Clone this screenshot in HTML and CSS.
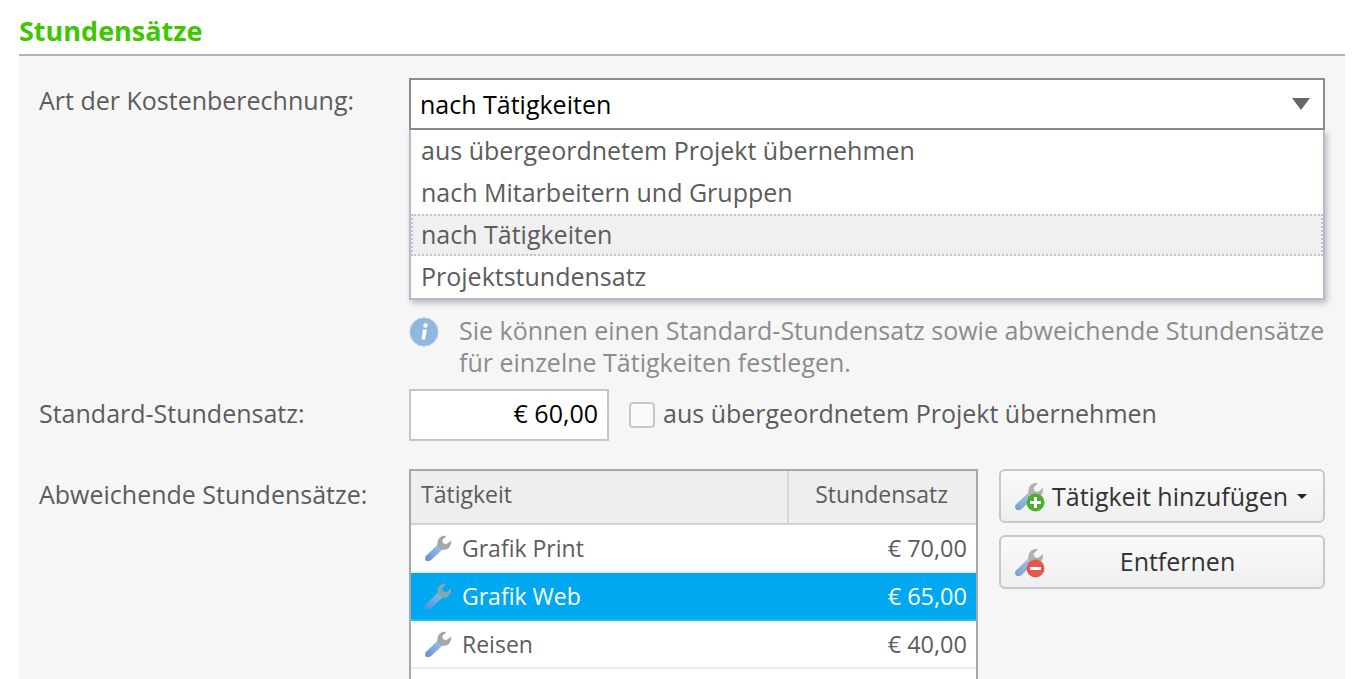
FILE: index.html
```html
<!DOCTYPE html>
<html lang="de">
<head>
  <meta charset="UTF-8">
  <title>Stundensätze</title>
  <link rel="stylesheet" href="styles.css">
</head>
<body>
  <svg class="defs" width="0" height="0" aria-hidden="true">
    <defs>
      <linearGradient id="handle" x1="0" y1="1" x2="1" y2="0">
        <stop offset="0" stop-color="#5f8fd0"/>
        <stop offset="1" stop-color="#a3c4ec"/>
      </linearGradient>
      <symbol id="wrench" viewBox="0 0 30 30">
        <path d="M1.500 24 L15 11 L20 16.500 L7 28.500 Q4 30 2 28.500 Q0.500 26.500 1.500 24 Z" fill="url(#handle)"/>
        <path d="M14.500 13 Q13.500 6 18 3 Q20.500 1.500 24 2 L19.500 7 L20.500 10 L24 11 L29 7 Q29.500 12 26.500 15 Q23 18 19 16.500 Z" fill="#a6a6a6"/>
      </symbol>
    </defs>
  </svg>

  <main>
    <h2>Stundensätze</h2>
    <section class="panel">
      <div class="row row-type">
        <label>Art der Kostenberechnung:</label>
        <div class="field">
          <div class="select">
            <span>nach Tätigkeiten</span>
            <svg class="select-arrow" width="20" height="14" viewBox="0 0 20 14"><path d="M1 1 H19 L10 13 Z" fill="#666"/></svg>
          </div>
          <ul class="options">
            <li>aus übergeordnetem Projekt übernehmen</li>
            <li>nach Mitarbeitern und Gruppen</li>
            <li class="current">nach Tätigkeiten</li>
            <li>Projektstundensatz</li>
          </ul>
          <div class="note">
            <svg class="note-icon" width="30" height="30" viewBox="0 0 30 30">
              <circle cx="15" cy="15" r="14" fill="#8fb8e0"/>
              <circle cx="15" cy="15" r="14" fill="none" stroke="#a9c6e3" stroke-width="1"/>
              <circle cx="16.500" cy="8.500" r="2.200" fill="#fff"/>
              <path d="M14 12.500 H18 L16 22.500 H12.500 Z" fill="#fff"/>
            </svg>
            <p>Sie können einen Standard-Stundensatz sowie abweichende Stundensätze für einzelne Tätigkeiten festlegen.</p>
          </div>
        </div>
      </div>

      <div class="row row-rate">
        <label>Standard-Stundensatz:</label>
        <div class="field field-inline">
          <div class="money">€ 60,00</div>
          <span class="checkbox"></span>
          <span class="check-label">aus übergeordnetem Projekt übernehmen</span>
        </div>
      </div>

      <div class="row row-rates">
        <label>Abweichende Stundensätze:</label>
        <div class="field field-table">
          <div class="table">
            <div class="thead">
              <div class="th th-name">Tätigkeit</div>
              <div class="th th-rate">Stundensatz</div>
            </div>
            <div class="tr">
              <svg class="wrench" width="28" height="28"><use href="#wrench"/></svg>
              <span class="name">Grafik Print</span><span class="rate">€ 70,00</span>
            </div>
            <div class="tr selected">
              <svg class="wrench" width="28" height="28"><use href="#wrench"/></svg>
              <span class="name">Grafik Web</span><span class="rate">€ 65,00</span>
            </div>
            <div class="tr">
              <svg class="wrench" width="28" height="28"><use href="#wrench"/></svg>
              <span class="name">Reisen</span><span class="rate">€ 40,00</span>
            </div>
            <div class="tr"></div>
          </div>
          <div class="actions">
            <button type="button">
              <span class="btn-icon">
                <svg class="wrench" width="30" height="30"><use href="#wrench"/></svg>
                <svg class="badge" width="19" height="19" viewBox="0 0 19 19">
                  <circle cx="9.500" cy="9.500" r="9" fill="#4cb02c"/>
                  <path d="M8 4 H11 V8 H15 V11 H11 V15 H8 V11 H4 V8 H8 Z" fill="#fff"/>
                </svg>
              </span>
              <span class="btn-text">Tätigkeit hinzufügen</span>
              <span class="caret"></span>
            </button>
            <button type="button">
              <span class="btn-icon">
                <svg class="wrench" width="30" height="30"><use href="#wrench"/></svg>
                <svg class="badge" width="19" height="19" viewBox="0 0 19 19">
                  <circle cx="9.500" cy="9.500" r="9" fill="#e4574c"/>
                  <rect x="4" y="8" width="11" height="3" fill="#fff"/>
                </svg>
              </span>
              <span class="btn-text btn-center">Entfernen</span>
            </button>
          </div>
        </div>
      </div>
    </section>
  </main>
</body>
</html>
```

FILE: styles.css
```css
html, body {
  margin: 0;
  padding: 0;
  height: 679px;
  overflow: hidden;
  background-color: #fff;
  font-family: "Open Sans", sans-serif;
  font-size: 25px;
  color: #5c5c5c;
}

.defs {
  position: absolute;
}

main {
  width: 1326px;
  margin-left: 19px;
}

h2 {
  margin: 0;
  height: 56px;
  box-sizing: border-box;
  padding-top: 14px;
  font-size: 27px;
  line-height: 34px;
  font-weight: 700;
  color: #3ec700;
  border-bottom: 2px solid #b3b3b3;
}

.panel {
  background-color: #f6f6f6;
  padding: 22px 20px 0;
  height: 623px;
  box-sizing: border-box;
  overflow: hidden;
}

.row {
  display: flex;
}

.row > label {
  width: 370px;
  flex: none;
  line-height: 44px;
}

.row-rate > label {
  line-height: 48px;
}

.row-rates > label {
  line-height: 50px;
}

.field {
  width: 916px;
}

.select {
  height: 52px;
  box-sizing: border-box;
  border: 2px solid #8c8c8c;
  background-color: #fff;
  color: #000;
  padding: 0 12px 0 9px;
  line-height: 50px;
  display: flex;
  justify-content: space-between;
  align-items: center;
}

.options {
  list-style: none;
  margin: 0;
  padding: 0;
  background-color: #fff;
  border: 2px solid #b6bace;
  border-top: 0;
  box-shadow: 2px 3px 6px rgba(0, 0, 0, 0.25);
}

.options li {
  height: 42px;
  box-sizing: border-box;
  line-height: 40px;
  padding-left: 10px;
}

.options .current {
  background-color: #f0f0f0;
  outline: 2px dotted #c4c4c4;
  outline-offset: -2px;
}

.note {
  display: flex;
  gap: 20px;
  margin-top: 14px;
  margin-right: -8px;
  color: #8c8c8c;
}

.note-icon {
  flex: none;
  margin-top: 3px;
}

.note p {
  margin: 0;
  line-height: 32px;
}

.row-rate {
  margin-top: 11px;
}

.field-inline {
  display: flex;
  align-items: center;
}

.money {
  width: 200px;
  height: 52px;
  box-sizing: border-box;
  border: 2px solid #c6c6c6;
  background-color: #fff;
  color: #000;
  text-align: right;
  padding-right: 9px;
  line-height: 44px;
}

.checkbox {
  width: 26px;
  height: 26px;
  box-sizing: border-box;
  margin-left: 20px;
  border: 2px solid #c8c8c8;
  border-radius: 4px;
  background-color: #fafafa;
}

.check-label {
  margin-left: 8px;
  padding-bottom: 4px;
}

.row-rates {
  margin-top: 28px;
}

.field-table {
  display: flex;
  gap: 21px;
  align-items: flex-start;
}

.table {
  width: 569px;
  flex: none;
  box-sizing: border-box;
  border: 2px solid #a8a8a8;
  border-bottom: 0;
  background-color: #fff;
  font-size: 23px;
}

.thead {
  display: flex;
  height: 52px;
  background-color: #eee;
  border-bottom: 2px solid #d2d2d2;
}

.th {
  line-height: 46px;
  box-sizing: border-box;
}

.th-name {
  width: 378px;
  padding-left: 10px;
  border-right: 2px solid #d8d8d8;
}

.th-rate {
  flex: 1;
  text-align: right;
  padding-right: 28px;
}

.tr {
  display: flex;
  align-items: center;
  height: 48px;
  box-sizing: border-box;
  border-bottom: 2px solid #ebebeb;
  padding: 0 9px 0 13px;
}

.tr.selected {
  background-color: #00a9ef;
  border-bottom-color: #1abcff;
  color: #fff;
}

.tr.selected .wrench {
  opacity: 0.8;
}

.tr .wrench {
  flex: none;
  margin-right: 10px;
}

.name {
  flex: 1;
}

.rate {
  font-size: 23.500px;
}

.actions {
  flex: 1;
  display: flex;
  flex-direction: column;
  gap: 12px;
}

button {
  display: flex;
  align-items: center;
  height: 54px;
  padding: 0 0 0 13px;
  box-sizing: border-box;
  border: 2px solid #c8c8c8;
  border-radius: 6px;
  background: linear-gradient(#fafafa, #efefef);
  font-family: "Open Sans", sans-serif;
  font-size: 25px;
  color: #333;
}

.btn-icon {
  position: relative;
  width: 30px;
  height: 30px;
  flex: none;
  margin-right: 8px;
}

.btn-icon .wrench {
  opacity: 0.85;
}

.btn-icon .badge {
  position: absolute;
  right: -1px;
  bottom: -1px;
}

.btn-center {
  flex: 1;
  text-align: center;
  padding-right: 20px;
  padding-bottom: 2px;
}

.caret {
  width: 0;
  height: 0;
  margin-left: 9px;
  border-left: 5px solid transparent;
  border-right: 5px solid transparent;
  border-top: 5px solid #222;
}
```
